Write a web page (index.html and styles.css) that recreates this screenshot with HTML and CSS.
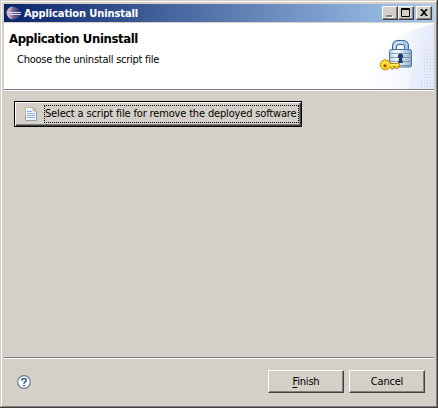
FILE: index.html
```html
<!DOCTYPE html>
<html lang="en">
<head>
<meta charset="utf-8">
<title>Application Uninstall</title>
<link rel="stylesheet" href="styles.css">
</head>
<body>
<div class="window">
  <div class="titlebar">
    <svg class="app-icon" width="16" height="16" viewBox="0 0 16 16">
      <defs><linearGradient id="orb" x1="0" y1="0" x2="1" y2="0"><stop offset="0" stop-color="#d3b5cd"/><stop offset=".45" stop-color="#735f91"/><stop offset="1" stop-color="#29357a"/></linearGradient></defs>
      <path d="M7 1.5a6.5 6.5 0 0 0 0 13C3 11 3 5 7 1.5Z" fill="#d9b3bd"/>
      <circle cx="8.3" cy="8" r="6" fill="url(#orb)"/>
      <path d="M3 7.500H15M3 9.500H15" stroke="#d7dcf3" stroke-width="1"/>
    </svg>
    <span class="title">Application Uninstall</span>
    <div class="controls">
      <button class="control"><svg width="14" height="12"><path d="M4 9H10V11H4Z" fill="#fff"/><path d="M3 8H9V10H3Z" fill="#85827c"/></svg></button>
      <button class="control"><svg width="14" height="12"><path d="M2.5 1.5H10.5V9.5H2.5ZM2 2.5H11" fill="none" stroke="#000"/></svg></button>
      <button class="control close"><svg width="14" height="12"><path d="M3 2H5L7 4L9 2H11L8 5.5L11 9H9L7 7L5 9H3L6 5.5Z" fill="#000"/></svg></button>
    </div>
  </div>
  <header class="banner">
    <div class="banner-text">
      <h1>Application Uninstall</h1>
      <p>Choose the uninstall script file</p>
    </div>
    <svg class="banner-art" width="76" height="66" viewBox="0 0 76 66">
      <defs>
        <linearGradient id="wash" x1="0" y1="0" x2="1" y2="0"><stop offset="0" stop-color="#fff"/><stop offset=".5" stop-color="#f7f9fe"/><stop offset="1" stop-color="#e3eaf9"/></linearGradient>
        <linearGradient id="metal" x1="0" y1="0" x2="1" y2="0"><stop offset="0" stop-color="#b7cadd"/><stop offset=".35" stop-color="#fff"/><stop offset="1" stop-color="#8da8c5"/></linearGradient>
        <pattern id="dots" width="3" height="3" patternUnits="userSpaceOnUse"><path d="M0 0H1V1H0Z" fill="#c5d1ee"/></pattern>
      </defs>
      <path d="M4 66C14 32 38 8 76 1V66Z" fill="url(#wash)"/>
      <path d="M76 8Q58 24 50 66H76Z" fill="#e3eafa" opacity=".55"/>
      <path d="M66 30L76 24V66H57L65 55Z" fill="url(#dots)"/>
      <g transform="translate(8 0)">
        <path d="M26.500 28V23Q26.500 17.500 32 17.500H37Q42.500 17.500 42.500 23V28H38.500V24Q38.500 21.500 36 21.500H33Q30.500 21.500 30.500 24V28Z" fill="#a9c3dc" stroke="#3c6c9c"/>
        <path d="M28.500 26V23Q28.500 19.500 32 19.500H37" fill="none" stroke="#eff7ff"/>
        <rect x="23.500" y="26.500" width="22" height="17.500" rx="2" fill="url(#metal)" stroke="#4675a3"/>
        <path d="M23 30.500H46M23 34.500H46M23 38.500H46M24 42.500H45" stroke="#668bb0" opacity=".75"/>
        <path d="M34.500 30.500A2.700 2.700 0 0 1 36 35.500L37 40H32L33 35.500A2.700 2.700 0 0 1 34.500 30.500Z" fill="#163f70"/>
        <path d="M24 40.500H33.500V43.500H32V45.500H29.500V43.500H27.500V46H25V44H23.700A5 5 0 1 1 24 40.500Z" fill="#ffda24" stroke="#bd8c0c"/>
        <path d="M16 41.500Q19 37.500 22 41M24 41.500H32" fill="none" stroke="#fff28a"/>
        <circle cx="19" cy="42.800" r="1.600" fill="#9c5017"/>
      </g>
    </svg>
  </header>
  <main>
    <button class="script-button">
      <svg width="12" height="14" viewBox="0 0 12 14"><path d="M.5.5H8L11.500 4V13.500H.5Z" fill="#f2f7ff" stroke="#8ca0bd"/><path d="M.5 8V.5H8" fill="none" stroke="#c7b98f"/><path d="M8 .5V4H11.500Z" fill="#e2cf9b" stroke="#b5a57e" stroke-width=".7"/><path d="M2 4.500H7M2 6.500H10M2 8.500H10M2 10.500H10" stroke="#8daddc"/></svg>
      <span class="focus"><span class="script-label">Select a script file for remove the deployed software</span></span>
    </button>
  </main>
  <footer>
    <svg class="help" width="14" height="14" viewBox="0 0 14 14"><circle cx="7" cy="7" r="6.300" fill="#fff" stroke="#667f9f" stroke-width="1.200"/><path d="M4.700 5.400Q4.700 3.500 7 3.500T9.300 5.300Q9.300 6.300 8.100 6.900Q7 7.400 7 8.700M7 9.700V11.300" fill="none" stroke="#3c587f" stroke-width="1.600"/></svg>
    <div class="actions">
      <button class="action finish"><span><u>F</u>inish</span></button>
      <button class="action cancel"><span>Cancel</span></button>
    </div>
  </footer>
</div>
</body>
</html>
```
FILE: styles.css
```css
* { box-sizing: border-box; }
body { margin: 0; background: #d4d0c8; color: #000; font: 11px "DejaVu Sans Condensed", "DejaVu Sans", sans-serif; font-stretch: condensed; }
button { margin: 0; padding: 0; font: inherit; color: inherit; border-radius: 0; background: #d4d0c8; white-space: nowrap; }
svg { display: block; flex: none; }
.window { width: 438px; height: 408px; padding: 4px; display: flex; flex-direction: column; overflow: hidden; box-shadow: inset -1px -1px #404040, inset 1px 1px #d4d0c8, inset -2px -2px #808080, inset 2px 2px #fff; }
.titlebar { height: 18px; flex: none; display: flex; align-items: center; padding: 0 2px; background: linear-gradient(90deg, #0a246a, #a6caf0); color: #fff; }
.title { margin-left: 2px; font-weight: bold; font-size: 11px; letter-spacing: -.1px; white-space: nowrap; }
.controls { display: flex; margin-left: auto; }
.control { width: 16px; height: 14px; border: 1px solid; border-color: #fff #404040 #404040 #fff; box-shadow: inset -1px -1px #808080; }
.close { margin-left: 2px; }
.banner { height: 67px; margin-top: 1px; flex: none; display: flex; justify-content: space-between; background: #fff; border-bottom: 1px solid #808080; box-shadow: 0 1px #fff; }
.banner-text { padding: 7px 0 0 5px; white-space: nowrap; }
h1 { margin: 0; font-size: 13px; line-height: 17px; letter-spacing: -.4px; }
p { margin: 6px 0 0 8px; line-height: 14px; letter-spacing: -.25px; }
main { flex: 1; padding: 11px 10px; }
.script-button { width: 288px; height: 26px; display: flex; align-items: center; padding-left: 10px; border: 1px solid #000; box-shadow: inset 1px 1px #fff, inset -1px -1px #404040, inset -2px -2px #808080; }
.focus { width: 255px; height: 18px; margin-left: 7px; border: 1px dotted #000; line-height: 15px; text-align: left; letter-spacing: -.16px; }
footer { height: 47px; flex: none; display: flex; justify-content: space-between; border-top: 1px solid #808080; box-shadow: inset 0 1px #fff; }
.help { margin: 17px 0 0 13px; }
.actions { display: flex; gap: 5px; margin: 12px 9px 0 0; }
.action { width: 76px; height: 23px; border: 1px solid; border-color: #fff #404040 #404040 #fff; box-shadow: inset -1px -1px #808080; letter-spacing: -.2px; }
u { text-underline-offset: 2px; }
```
